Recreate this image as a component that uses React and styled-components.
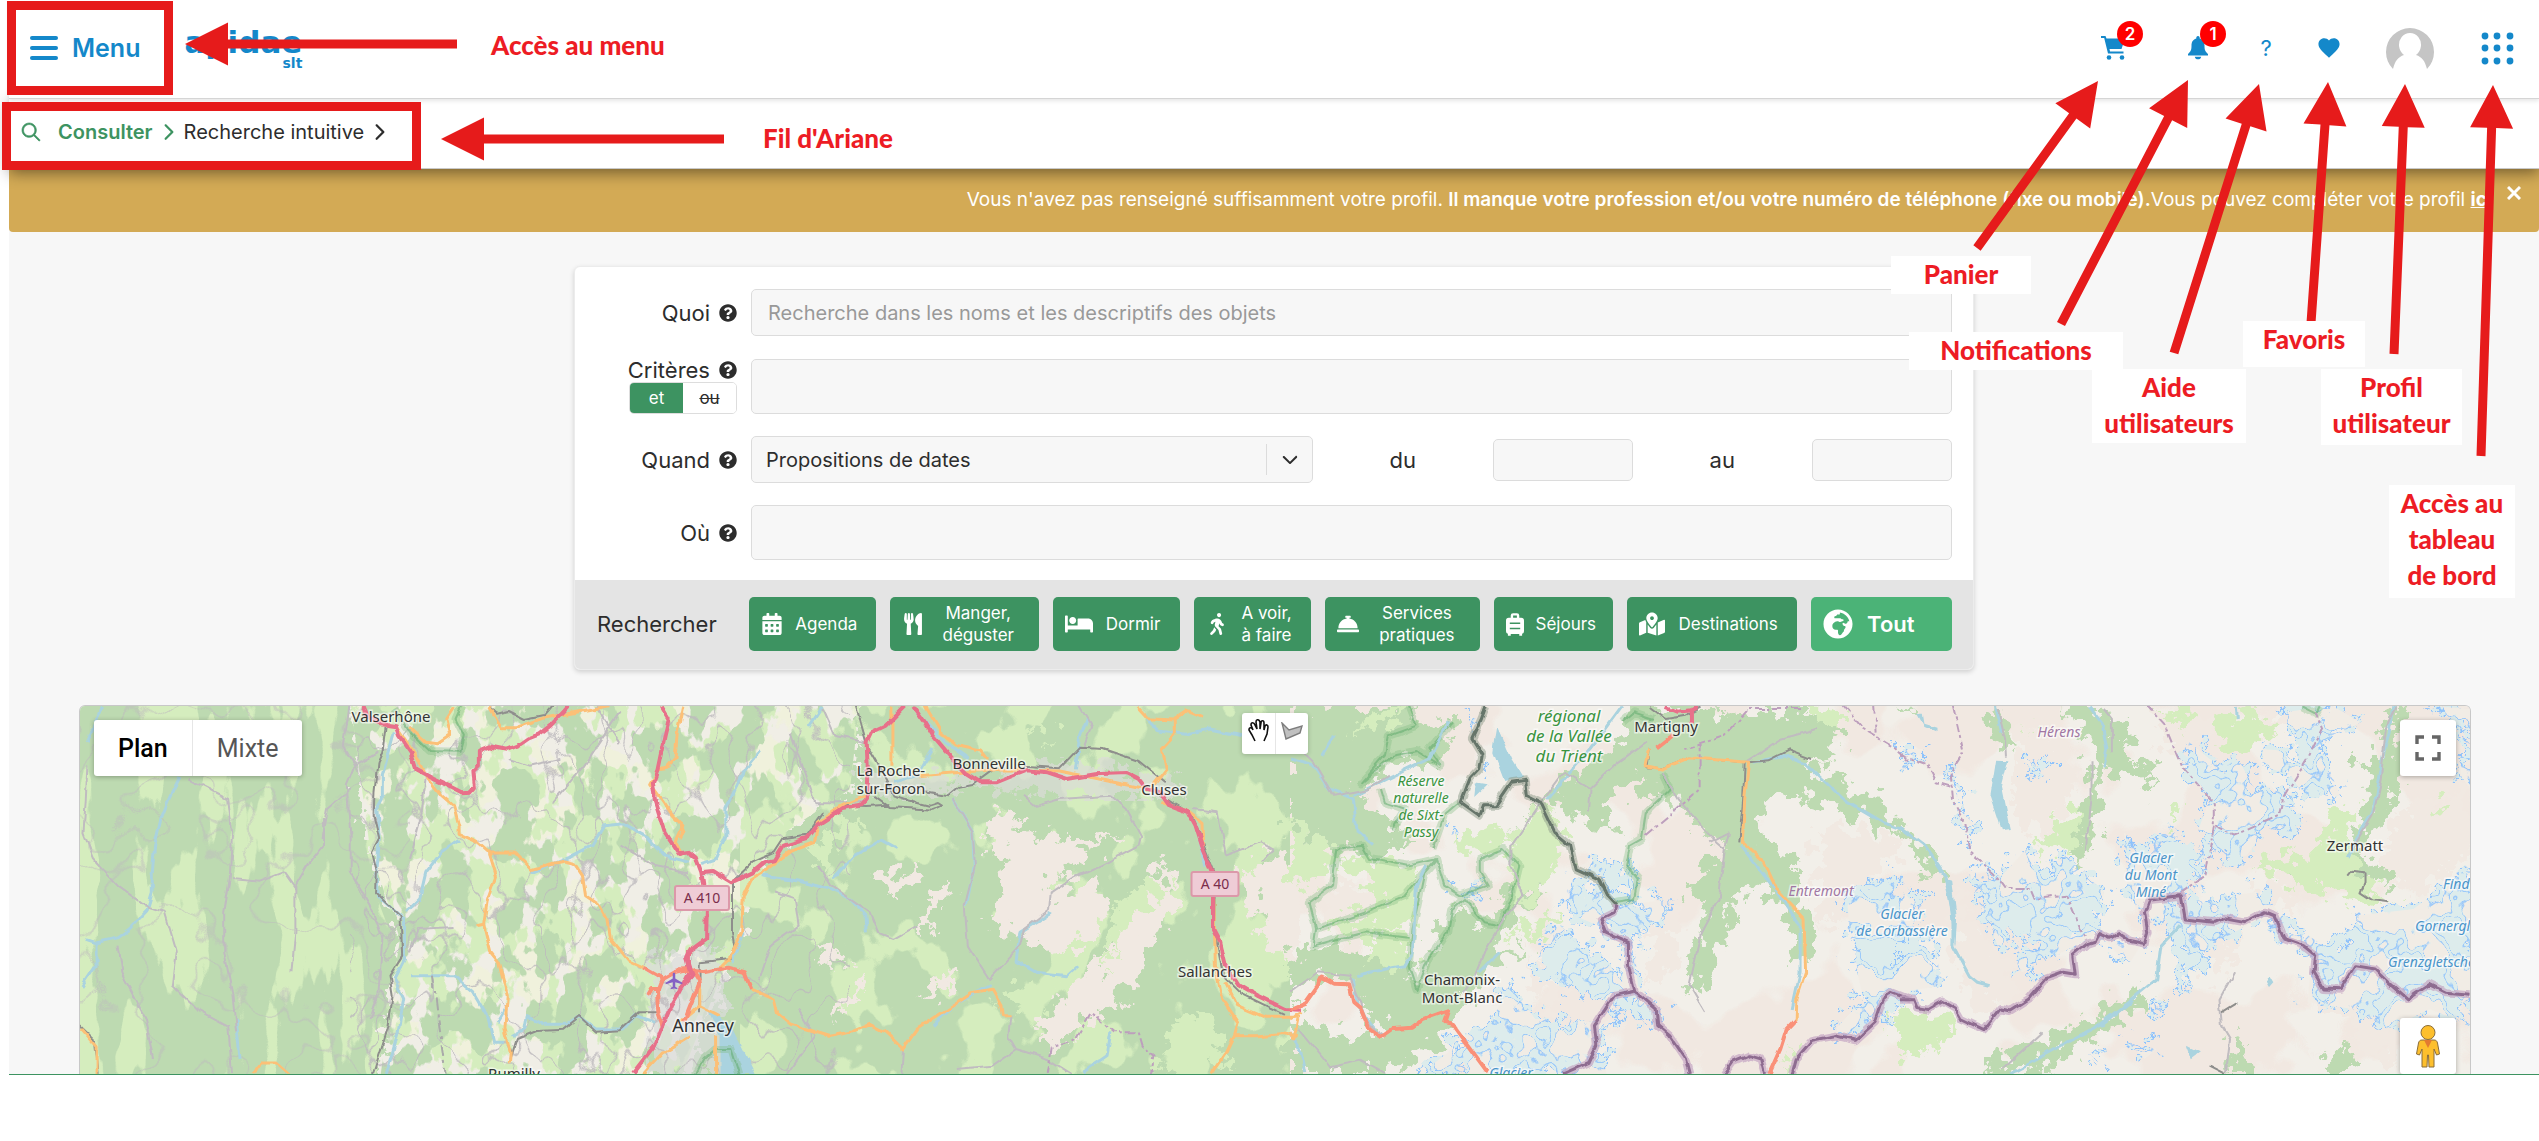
import { useState } from "react";
import styled, { createGlobalStyle } from "styled-components";
import {
  FaBed,
  FaCalendarAlt,
  FaConciergeBell,
  FaGlobeAfrica,
  FaMapMarkedAlt,
  FaQuestionCircle,
  FaUtensils,
  FaWalking,
} from "react-icons/fa";
import {
  IoIosArrowDown,
  IoIosArrowForward,
  IoIosSearch,
  IoMdHeart,
} from "react-icons/io";
import { MdLocalAirport } from "react-icons/md";

export default function App() {
  return (
    <Page>
      <GlobalStyle />
      <Header />
      <Breadcrumb />
      <Content>
        <ProfileBanner />
        <SearchForm />
        <MapPanel />
      </Content>
      <Annotations />
    </Page>
  );
}

function Header() {
  return (
    <TopBar>
      <MenuButton type="button">
        <Burger>
          <i />
          <i />
          <i />
        </Burger>
        Menu
      </MenuButton>
      <Logo href="#">
        apidae
        <small>slt</small>
      </Logo>
      <Tools>
        <ToolButton type="button" aria-label="Panier" $space={20}>
          <svg width="24" height="24" viewBox="0 0 24 24" fill="currentColor">
            <path d="M0 0H4.500L5.500 2.500H24L20.500 13H8.500L9 15.500H22.500V17.500H7L3.200 2H0Z" />
            <circle cx="8" cy="21.500" r="2.300" />
            <circle cx="21" cy="21.500" r="2.300" />
          </svg>
          <Badge>2</Badge>
        </ToolButton>
        <ToolButton type="button" aria-label="Notifications" $space={8}>
          <svg width="20" height="24" viewBox="0 0 20 24" fill="currentColor">
            <path d="M10 0C11.500 0 11.800 1.500 11.700 2.400 15.500 3.500 16.500 6.500 16.500 9.500 16.500 14 17 15 20 18V19.500H0V18C3 15 3.500 14 3.500 9.500 3.500 6.500 4.500 3.500 8.300 2.400 8.200 1.500 8.500 0 10 0ZM6.800 20.800H13.200C13 24.200 7 24.200 6.800 20.800Z" />
          </svg>
          <Badge>1</Badge>
        </ToolButton>
        <HelpButton type="button">?</HelpButton>
        <ToolButton type="button" aria-label="Favoris">
          <IoMdHeart size={26} />
        </ToolButton>
        <AvatarButton type="button" aria-label="Profil utilisateur">
          <svg width="50" height="50" viewBox="0 0 50 50">
            <path
              d="M8 46A24 24 0 1 1 42 46C40 38 37 34 31 32A11 12 0 1 0 19 32C13 34 10 38 8 46Z"
              fill="#c5c5c5"
            />
          </svg>
        </AvatarButton>
        <ToolButton type="button" aria-label="Tableau de bord">
          <svg width="36" height="33" viewBox="-3 0 36 33" fill="currentColor">
            {[4, 16, 29].map((y) =>
              [4, 16, 29].map((x) => <circle key={x + "-" + y} cx={x} cy={y} r="3.4" />)
            )}
          </svg>
        </ToolButton>
      </Tools>
    </TopBar>
  );
}

function Breadcrumb() {
  return (
    <Crumbs>
      <IoIosSearch size={24} color="#3d9361" stroke="#3d9361" strokeWidth="14" />
      <a href="#">Consulter</a>
      <IoIosArrowForward size={24} color="#3d9361" />
      <span>Recherche intuitive</span>
      <IoIosArrowForward size={24} />
    </Crumbs>
  );
}

function ProfileBanner() {
  return (
    <Banner>
      <p>
        Vous n'avez pas renseigné suffisamment votre profil.{" "}
        <strong>
          Il manque votre profession et/ou votre numéro de téléphone (fixe ou
          mobile).
        </strong>
        Vous pouvez compléter votre profil <a href="#">ici</a>
      </p>
      <CloseButton type="button" aria-label="Fermer">
        <svg width="14" height="14" viewBox="0 0 14 14" stroke="#fff" strokeWidth="3">
          <path d="M1 1L13 13M13 1L1 13" />
        </svg>
      </CloseButton>
    </Banner>
  );
}

const categories = [
  { label: "Agenda", icon: FaCalendarAlt, width: 127 },
  { label: "Manger,\ndéguster", icon: FaUtensils, width: 149 },
  { label: "Dormir", icon: FaBed, width: 127, size: 28 },
  { label: "A voir,\nà faire", icon: FaWalking, width: 118 },
  { label: "Services\npratiques", icon: FaConciergeBell, width: 155 },
  { label: "Séjours", icon: SuitcaseIcon, width: 119 },
  { label: "Destinations", icon: FaMapMarkedAlt, width: 170, size: 26 },
];

function SearchForm() {
  const [operator, setOperator] = useState("et");
  return (
    <Card>
      <Fields>
        <Label htmlFor="quoi">
          Quoi <FaQuestionCircle size={18} />
        </Label>
        <Input
          id="quoi"
          placeholder="Recherche dans les noms et les descriptifs des objets"
        />

        <CriteriaLabel>
          <Label htmlFor="criteres">
            Critères <FaQuestionCircle size={18} />
          </Label>
          <Toggle>
            {["et", "ou"].map((value) => (
              <ToggleButton
                key={value}
                type="button"
                $active={operator === value}
                onClick={() => setOperator(value)}
              >
                {value}
              </ToggleButton>
            ))}
          </Toggle>
        </CriteriaLabel>
        <Input id="criteres" $tall />

        <Label htmlFor="quand">
          Quand <FaQuestionCircle size={18} />
        </Label>
        <Dates>
          <SelectWrap>
            <select id="quand">
              <option>Propositions de dates</option>
            </select>
            <SelectArrow>
              <IoIosArrowDown size={22} />
            </SelectArrow>
          </SelectWrap>
          <label htmlFor="du">du</label>
          <DateInput id="du" />
          <label htmlFor="au">au</label>
          <DateInput id="au" />
        </Dates>

        <Label htmlFor="ou">
          Où <FaQuestionCircle size={18} />
        </Label>
        <Input id="ou" $tall />
      </Fields>
      <CardFooter>
        <FooterTitle>Rechercher</FooterTitle>
        {categories.map(({ label, icon: Icon, width, size = 22 }) => (
          <CategoryButton key={label} type="button" $width={width}>
            <Icon size={size} />
            <span>{label}</span>
          </CategoryButton>
        ))}
        <AllButton type="button" $width={141}>
          <FaGlobeAfrica size={30} />
          <span>Tout</span>
        </AllButton>
      </CardFooter>
    </Card>
  );
}

function SuitcaseIcon() {
  return (
    <svg width="18" height="23" viewBox="0 0 19 24" fill="currentColor">
      <path
        fillRule="evenodd"
        d="M5 5V2.500A2.500 2.500 0 0 1 7.500 0h4A2.500 2.500 0 0 1 14 2.500V5h2a3 3 0 0 1 3 3v11a3 3 0 0 1-2 2.800V24h-3v-2H5v2H2v-2.200A3 3 0 0 1 0 19V8a3 3 0 0 1 3-3zm2.500 0h4V2.500h-4zM4 10v1.500h11V10zm0 5.500V17h11v-1.500z"
      />
    </svg>
  );
}

function MapPanel() {
  return (
    <MapFrame>
      <MapDrawing />
      <MapTypes>
        <MapTypeButton type="button" $active>
          Plan
        </MapTypeButton>
        <MapTypeButton type="button">Mixte</MapTypeButton>
      </MapTypes>
      <DrawTools>
        <button type="button" aria-label="Déplacer">
          <svg width="22" height="24" viewBox="0 0 22 24" fill="#fff" stroke="#111" strokeWidth="1.600">
            <path
              d="M7 22L4 16 1 11C1 8 4 8 5 11L3 6C3 3 6 3 7 6L9 10 8 3C8 0 11 0 12 3L12 10 13 4C13 1 16 1 16 4L16 11 17 7C18 5 20 6 20 8L19 15 16 22"
            />
          </svg>
        </button>
        <button type="button" aria-label="Polygone">
          <svg width="22" height="18" viewBox="0 0 22 18">
            <path d="M1 1L8 8 21 4 19 11 5 17Z" fill="#c0c0c0" stroke="#7d7d7d" strokeWidth="1.400" />
          </svg>
        </button>
      </DrawTools>
      <MapSquareButton type="button" aria-label="Plein écran">
        <svg width="26" height="26" viewBox="0 0 26 26" fill="none" stroke="#666" strokeWidth="3.400">
          <path d="M2 9V2H9M17 2H24V9M24 17V24H17M9 24H2V17" />
        </svg>
      </MapSquareButton>
      <MapSquareButton type="button" aria-label="Street View" $bottom>
        <svg width="24" height="44" viewBox="0 0 24 44" stroke="#8a6d3b" strokeWidth="1">
          <path
            d="M6 16H18C20 16 21 17 21.500 19L23.500 30 20.500 31 18 25 18 43H13L12.500 31H11.500L11 43H6L6 25 3.500 31 .5 30 2.500 19C3 17 4 16 6 16Z"
            fill="#fdbf2d"
          />
          <path d="M8 16H16L12 24Z" fill="#e27a31" stroke="none" />
          <circle cx="12" cy="8.500" r="7" fill="#fdbf2d" />
        </svg>
      </MapSquareButton>
    </MapFrame>
  );
}

// Each sheet has its own grid: 2.53 units per pixel across, 3 units down.
const sheets = [
  {
    x: 70,
    scale: 0.3954,
    lakes: "",
    rivers:
      "M80 24L60 80 44 130M278 234L250 300 230 360 214 440 208 520 208 580 194 636 150 690 120 716 66 732 40 722M66 732L66 800 30 864M820 100L790 230 790 300 776 330 782 420 776 520 780 590 846 660 846 780 820 840 844 900 830 1000 800 1125M984 424L940 460 900 520 884 600 850 640M860 830L970 830 1020 880 1060 960 1074 1030 1100 1030M1100 930L1080 970M1120 1010L1150 990 1156 950 1200 976 1260 976 1290 956 1330 990 1400 990 1430 950 1480 970M1568 490L1500 470 1456 410 1400 374 1350 380 1320 440 1264 474 1166 520M420 960L430 1080",
    minor:
      "M44 200L40 300 34 400 60 480 120 560 190 620 240 640 270 760 260 860 320 930 400 980 410 1125M300 240L400 300 410 400 404 540 390 640 390 760 410 880 420 1000M704 20L690 140 720 200 700 260 710 420 710 520 760 620 790 720 780 880 760 960M640 360L640 440 600 500 570 560 570 700 560 820M970 684L880 690 860 760M1390 130L1330 20M1390 40L1300 200 1220 310M720 200L780 160M710 270L650 330 636 420M410 540L480 548 540 520 570 570M1240 180L1160 200 1110 180M1390 440L1480 500 1560 520M900 230L890 340 860 480M120 740L130 820 190 960 210 1080",
    rail:
      "M798 84L790 160 778 190 770 280 768 350 782 420 764 460 776 520 774 580 800 610 836 650 840 770 808 830 816 890 806 980 766 1125M1114 1080L1130 1020 1180 996 1250 992 1290 954 1330 998 1390 994 1440 940 1490 940M25 980L60 1020 70 1125M1060 24L1080 44 1110 36 1150 60 1200 48 1220 20",
    minorDash: "M918 830L930 950 950 1125",
    orange:
      "M824 82L880 180 900 230 940 290 970 320 984 380 984 406 1030 430 1060 462 1126 462 1166 512 1210 496 1250 486 1276 494 1296 530 1304 590 1336 616 1358 660 1364 716 1410 784 1450 806M1058 462L1076 532 1056 600 1046 676 1028 680M1046 676L1064 760 1084 790 1106 890 1100 990 1116 1060 1114 1090M1060 24L1090 86 1130 86 1200 56 1270 42 1364 20M1550 20L1536 100 1530 180 1510 208 1486 212 1466 254 1494 300 1524 350 1550 380 1530 430 1545 460M858 84L900 130 930 134 960 110 950 60 970 24M30 990L66 1040 66 1125M465 1125L480 1092 520 1092 552 1125M1568 1010L1500 1060 1450 1125",
    trunk:
      "M1450 806L1500 840 1530 820 1568 808M1500 840L1490 870 1470 870 1460 890M1484 870L1488 940 1500 985",
    motorway:
      "M742 20L752 50 780 74 824 82 832 110 862 160 876 212 920 240 960 262 990 280 1012 278 1024 262 1020 216 1034 200 1034 155 1060 142 1104 152 1140 135 1160 118 1186 106 1215 80 1250 36 1262 20M1494 20L1514 60 1504 110 1486 212 1474 250 1480 310 1504 400 1540 465 1568 458M1568 750L1558 775 1568 815 1540 880 1520 920 1498 985 1480 1040 1424 1125",
    reserve: "M820 30L860 100 910 156 985 158 996 110 975 60 990 20",
    region: "",
    border: "",
    frontier: "",
  },
  {
    x: 680,
    scale: 0.3954,
    lakes: "M70 930L130 980 190 1125 100 1125 100 1010Z",
    rivers:
      "M360 24L326 84M204 154L160 220 140 270 116 330 116 410 90 480 56 494M550 450L510 424 440 470 386 540M204 530L300 546 376 570 430 600 470 650 474 700M690 300L740 400 744 500 724 620M1008 800L980 830 900 820 850 786 860 700 940 640M786 860L736 890 690 920 640 980M1180 60L1210 96 1280 106 1340 90 1420 110M600 40L670 130 730 180M1000 214L1010 120 1030 60M1310 400L1330 500M1090 1000L1080 1070 1020 1120M160 700L130 790M640 150L600 230 540 250",
    minor:
      "M690 300L740 400 746 500 720 620 728 740 782 840 860 740 870 690 936 630 940 580 990 540 1080 490 1160 440 1166 410 1130 330 1090 290M360 30L390 110 470 130M280 100L340 310 470 310M236 580L290 600 300 680 230 740 200 850M350 500L380 560 480 640 500 700 540 720 600 680M300 930L340 1010 270 1125M836 950L830 1010 850 1050 930 1080 990 1125M850 1050L790 1100 700 1110M1300 330L1360 340 1380 470 1470 430 1500 450 1470 490M870 290L900 320 960 300 1090 290M564 1050L560 1125M1010 20L1040 80 1020 150",
    rail:
      "M445 20L464 100 476 150 510 220 540 290 600 310M490 290L530 324 640 332 660 320 650 312 630 320 560 300M620 280L680 292 706 266 740 258 790 214M870 200L960 208 1010 146 1070 150 1160 186 1226 250M410 320L470 324 530 320M362 340L320 410 262 420 240 460 184 490 134 546 134 700 140 740 126 780 50 790 48 940M1216 290L1296 350 1352 520 1352 700 1374 830 1420 884 1530 948",
    minorDash: "",
    orange:
      "M620 20L660 100 700 140 760 156 776 180M536 20L536 200M604 230L790 212 960 216 1180 270M472 290L410 320 350 370 340 430 280 456 220 510 180 540 160 590 156 700 130 770 100 806M180 870L236 900 244 940 280 976 380 1012 430 1000 480 976 520 1000 564 1050 600 990 690 920 736 884 790 874 812 920 815 950 836 950M1350 600L1354 800 1370 900 1410 970 1400 1010 1460 1010 1520 1004 1560 1010M1400 1010L1380 1060 1345 1120M1380 850L1410 920 1480 955 1568 955M1155 24L1180 56 1250 60 1250 110 1220 150 1230 210 1190 270M1250 60L1280 36 1320 56M1220 310L1290 340 1320 370 1322 450M0 370L10 400 0 420M0 970L50 920 100 950M50 850L50 920M90 1010L90 1125",
    trunk: "M0 810L60 820 120 806 164 820 180 870M30 810L50 850 10 970",
    motorway:
      "M0 462L24 460 40 476 54 520 84 516 130 550 184 520 214 490 240 484 262 440 320 420 350 376 410 330 456 320 472 300 476 240 472 130 484 100 520 80 570 20M590 20L620 70 640 110 690 180 720 220 760 250 800 250 876 214 930 220 980 240 1050 226 1130 222 1160 240 1180 270 1216 280 1240 320 1286 340 1304 380 1320 440 1348 520 1348 690 1366 730 1380 800 1410 856 1460 890 1530 930 1568 932M54 520L68 630 66 720 20 760 20 800 30 830 0 870",
    reserve: "M40 1125L60 1080 90 1050 130 1050 150 1125",
    region: "M930 1125L940 1045 1000 1020 1040 940 1070 970 1100 1000 1160 1000 1170 1040 1200 1070 1190 1125",
    border: "",
    frontier: "",
  },
  {
    x: 1290,
    scale: 0.3954,
    lakes: "M524 84L560 180 590 236 542 246 514 160ZM470 250L500 256 466 294Z",
    rivers:
      "M0 180L60 200 100 270 160 300 170 400 210 440M400 70L350 180 160 290M344 500L320 560 310 760 290 800 200 820 170 830M1170 190L1250 170 1300 190 1400 300 1500 370 1568 400M1140 440L1220 560 1290 680 1290 820 1270 930M840 20L760 150 650 300M0 1000L30 1060 40 1125M530 760L480 820M160 840L170 920 220 1000M110 110L80 170",
    minor:
      "M640 300L560 440 560 500 590 590 540 660 500 740 470 830 440 880M640 300L690 220 760 270 830 190 900 130M756 340L760 270M940 220L980 300 1080 430 1100 450 1084 600 1040 700 1010 860 1050 940M0 880L70 820 150 830 200 980 240 1010M20 990L100 1105 180 1085 240 1125M1150 190L1240 120 1330 90M1100 450L1110 400 1060 430M0 120L60 190 110 290 200 270 250 230",
    rail:
      "M910 24L950 60 1000 50 1040 24M910 150L904 205 940 208 1010 176 1150 190 1146 300 1136 430M1160 190L1210 184 1260 154 1316 180",
    minorDash: "",
    orange:
      "M910 150L900 200 940 210 1010 176 1160 190 1150 300 1144 430 1200 490 1230 570 1300 660 1304 820 1282 900 1280 960M0 960L30 940M0 1000L10 1020 20 960",
    trunk:
      "M0 930L40 910 70 860 80 836 110 854 150 856 160 910 180 930 200 990 232 1014 260 990 310 986 340 960 400 934 390 970 410 975 500 1120M1280 960L1256 990 1240 1050 1212 1125M968 110L930 145",
    motorway: "M950 24L980 38 1014 34 1030 24M1014 34L1014 70",
    reserve:
      "M300 20L320 80 250 110 240 170 180 250 260 170 320 156 380 200 350 150 410 70M120 450L106 560 50 610 66 690 190 640 290 590 370 480 300 500 200 480 180 440 120 450M66 690L60 740 120 720 190 700 300 716M340 520L310 690 300 800 320 870 350 780 400 700 410 630 440 600 490 670 530 680 560 600 580 500 540 450 480 480 480 520 500 560 430 590 390 560 370 480 M360 450L390 350 430 310M940 220L960 270 900 340 890 420 860 440 850 500 880 540 870 600 820 610M840 70L870 40 920 60M230 270L240 310 290 330 260 390",
    region:
      "M1400 20L1450 90 1520 140 1568 190M1480 20L1484 110M1036 130L1036 270 980 330 900 410M1290 30L1160 30 1100 110 1000 150",
    border:
      "M496 20L484 60 460 120 486 170 480 206 456 236 432 310 480 350 490 320 520 320 560 250 596 244 600 290 634 310 670 400 710 440 724 510 780 540 800 590 824 620",
    frontier:
      "M824 620L820 640 786 660 800 700 856 730 856 800 872 876 820 890 770 980 776 1040 756 1090 690 1125M872 876L926 930 930 980 960 1010 1000 1080 1010 1125M1100 1125L1120 1090 1160 1070 1190 1080 1200 1125M1270 1125L1280 1080 1320 1024 1380 1010 1430 1024 1480 970 1500 900 1520 880 1568 902",
  },
  {
    x: 1900,
    scale: 0.4075,
    lakes:
      "M236 182L266 184 250 260 272 390 250 394 222 290ZM115 540L128 545 140 660 136 740 124 640ZM476 990L560 906 570 910 500 980ZM704 1040L736 1060 716 1078ZM906 828L916 850 904 866 896 850ZM42 44L56 44 60 74 92 86 92 100 60 84Z",
    rivers:
      "M0 384L60 440 110 530 130 640 130 740 170 830 190 850 220 860M686 680L640 740 630 840 560 910 476 990 380 1050 270 1125M462 20L500 80 510 150 500 206M1210 20L1200 100 1180 200 1160 340 1120 420 1100 480M232 24L250 100M825 24L828 60",
    minor:
      "M1216 24L1192 90 1180 240 1160 350 1110 450M820 820L784 900 790 980 810 1020 800 1120M470 190L470 300 456 450M500 30L520 60 520 160M240 30L258 120 260 170M350 1000L250 1110",
    rail: "M1100 530L1110 515 1140 520 1140 550 1130 580 1160 604 1200 610M790 940L830 910M760 1100L800 1125",
    minorDash: "",
    orange: "",
    trunk: "",
    motorway: "",
    reserve: "M985 22L1020 44 1030 22",
    region:
      "M130 20L156 160 124 220 130 300 160 370 170 460 230 520 260 570 320 570 330 600 410 590 440 680 460 720M606 20L650 80 690 200 740 270 770 310 770 380 820 410 930 350 940 300 1000 180 1036 90 1020 40M770 380L750 530 680 590M0 170L70 200 90 250 130 265",
    border: "",
    frontier:
      "M0 902L36 902 44 926 70 932 104 908 136 930 150 960 206 992 246 930 270 936 316 900 356 840 400 820 430 826 424 770 460 734 480 726 490 704 516 718 536 704 560 724 600 734 608 700 600 640 612 600 690 590 700 660 770 670 796 656 850 668 896 638 920 650 944 720 990 740 1020 770 1016 820 1040 870 1080 872 1116 800 1166 810 1200 850 1246 900 1300 856 1340 880 1400 886",
  },
];

const lineStyles = [
  { key: "reserve", stroke: "#7dbb7d", width: 8, opacity: 0.35 },
  { key: "reserve", stroke: "#5aa76a", width: 2, opacity: 0.5 },
  { key: "rivers", stroke: "#aad3df", width: 3 },
  { key: "minor", stroke: "#c0bcc0", width: 2 },
  { key: "minorDash", stroke: "#a9a9a9", width: 2, dash: "12 4 3 4" },
  { key: "rail", stroke: "#8e8e8c", width: 2 },
  { key: "orange", stroke: "#fcc077", width: 3 },
  { key: "trunk", stroke: "#fa9078", width: 4 },
  { key: "motorway", stroke: "#e8708a", width: 4 },
  { key: "region", stroke: "#bd9fbd", width: 2, dash: "9 3 3 3" },
  { key: "border", stroke: "#8d9c8a", width: 8, opacity: 0.5 },
  { key: "border", stroke: "#66756a", width: 3 },
  { key: "frontier", stroke: "#c5a5c3", width: 8, opacity: 0.7 },
  { key: "frontier", stroke: "#8e6c90", width: 3 },
];

const land = [
  {
    x: 680,
    scale: 0.3954,
    rock:
      "M790 340L860 336 840 400 960 420 1030 420 1124 388 1060 450 1000 500 930 560 980 580 1060 560 1080 620 1050 720 960 760 900 740 780 660 830 540 780 470ZM1230 480L1260 600 1210 720 1140 860 1050 950 960 1050 900 1010 960 900 1060 790 1120 640ZM510 520L600 520 590 560 540 590ZM350 750L410 740 410 800 370 800ZM390 920L460 830 450 900 400 960ZM600 640L690 540 670 600 610 700ZM620 870L720 790 680 860 600 920ZM1420 500L1568 470 1568 800 1480 740Z",
    forest: "",
    meadow:
      "M880 60L940 70 940 120 900 110ZM320 440L440 350 480 380 380 460 360 520ZM800 890L860 850 960 860 900 960ZM1100 620L1200 540 1240 560 1130 680 1080 800ZM1260 960L1320 920 1400 1100 1200 1120Z",
    glacier: "",
  },
  {
    x: 1290,
    scale: 0.3954,
    rock: "M90 560L280 560 140 660 70 680ZM940 600L990 640 970 820 900 860ZM600 760L700 900 640 960ZM1330 380L1560 420 1500 500 1340 700Z",
    forest:
      "M0 20L300 20 320 80 420 60 400 120 380 200 260 180 180 280 220 340 320 430 200 480 120 440 0 380ZM540 440L640 300 720 220 840 120 860 20 1040 20 1160 60 1200 30 1290 40 1390 90 1380 180 1300 190 1470 290 1568 400 1500 390 1400 340 1300 300 1210 280 1190 420 1290 500 1290 600 1330 700 1320 800 1280 800 1260 650 1180 560 1130 590 1100 720 1050 860 1000 880 1020 740 1060 620 990 580 1100 440 1000 340 940 260 900 320 880 240 800 300 820 420 740 360 640 310ZM60 740L220 760 300 800 330 860 370 700 440 620 480 680 560 560 600 520 640 560 560 680 500 760 600 740 500 820 420 960 400 1000 300 1080 240 1010 180 900 150 850 80 830 0 900 0 760ZM0 960L120 1000 240 1010 400 960 330 1060 250 1125 0 1125Z",
    meadow:
      "M120 480L320 500 300 700 150 700 80 690 240 600ZM560 420L640 320 700 440 640 560 560 640ZM0 380L120 440 100 520 0 560ZM400 420L540 380 560 440 470 470ZM200 700L300 720 290 800 200 800ZM150 120L240 80 300 40 240 20ZM560 700L680 640 620 740ZM1280 20L1390 20 1380 90ZM1250 1040L1280 1050 1260 1125ZM1510 940L1568 930 1568 1080Z",
    glacier:
      "M730 500L790 480 850 490 870 540 870 600 820 610 780 540ZM700 560L790 560 830 620 970 600 920 690 870 720 880 860 940 930 900 980 860 900 790 1000 800 1125 330 1125 400 1060 420 1020 500 980 560 860 620 960 700 960 830 980 800 900 720 880 620 800 640 740 680 680 780 760 840 850 850 730 780 680 700 640ZM1410 620L1450 560 1510 530 1568 600 1568 900 1480 960 1400 1020 1380 990 1450 900 1420 740ZM480 180L500 190 490 220ZM400 390L420 400 400 415ZM430 570L490 550 480 580 440 590ZM455 50L470 60 460 110ZM1545 180L1568 190 1550 215Z",
  },
  {
    x: 1900,
    scale: 0.4075,
    rock:
      "M280 80L400 120 440 220 360 420 280 360ZM600 20L780 60 690 200ZM880 500L1000 600 900 640ZM1220 340L1400 260 1400 460 1240 600 1180 500ZM130 560L200 700 300 860 200 960 140 800ZM700 620L840 700 780 860ZM940 860L1220 960 1200 1125 1100 980ZM860 20L950 30 900 140Z",
    forest:
      "M210 20L250 20 270 150 240 140ZM380 20L470 20 500 60 540 50 570 120 550 180 610 180 630 280 580 220 490 240 490 330 450 490 430 430 460 260 480 120ZM1200 20L1250 20 1230 80 1240 230 1180 380 1130 460 1190 500 1200 550 1070 530 940 540 930 490 1060 500 1130 400 1150 260 1120 180 1180 180ZM200 1125L240 1060 350 1040 440 970 600 870 620 890 520 980 420 1060 380 1110ZM0 380L60 440 120 530 90 550 20 440ZM1020 1125L1060 1070 1100 1020 1110 1125ZM800 1125L830 1000 860 1125ZM0 20L50 20 20 50Z",
    meadow:
      "M760 60L880 40 930 100 820 160ZM870 500L1030 440 1060 320 1120 330 1100 440 1180 600 1240 620 1100 600 950 540ZM330 460L400 340 450 320 430 460ZM0 960L120 950 130 1010 30 1080 0 1070ZM640 30L720 40 700 100ZM650 320L690 330 680 370ZM1310 310L1350 310 1330 350ZM320 60L340 80 330 110Z",
    glacier:
      "M0 600L60 600 30 680 90 760 100 860 0 880ZM170 520L250 530 310 450 330 520 410 470 500 580 490 700 430 740 300 820 280 800 340 700 240 740 200 630ZM710 130L760 180 800 200 830 180 870 270 960 280 980 400 900 390 850 470 790 480 730 400 760 300 690 200ZM550 400L600 460 660 380 700 440 760 460 740 540 680 600 620 660 560 600ZM610 620L700 610 870 580 900 590 940 660 1040 740 1110 700 1120 650 1260 630 1400 500 1400 980 1300 930 1200 990 1110 930 1000 910 1010 780 880 660 760 740 700 880 680 720ZM940 40L1060 20 1130 70 1040 130 1050 200 1080 290 990 290 960 230 890 200 890 150 980 160ZM300 180L370 180 340 230ZM0 150L60 150 20 190ZM1300 20L1400 30 1400 270 1370 220 1380 100ZM610 920L650 900 640 940ZM560 1030L630 1050 600 1080ZM470 1070L490 1070 480 1105ZM500 720L590 740 560 800ZM120 220L150 220 140 290ZM140 330L200 390 170 440Z",
  },
];

const places = [
  { x: 391, y: 723, lines: ["Valserhône"] },
  { x: 891, y: 777, lines: ["La Roche-", "sur-Foron"] },
  { x: 989, y: 770, lines: ["Bonneville"] },
  { x: 1164, y: 796, lines: ["Cluses"] },
  { x: 1215, y: 978, lines: ["Sallanches"] },
  { x: 703, y: 1033, lines: ["Annecy"], size: 18 },
  { x: 514, y: 1080, lines: ["Rumilly"] },
  { x: 1666, y: 733, lines: ["Martigny"] },
  { x: 1462, y: 986, lines: ["Chamonix-", "Mont-Blanc"] },
  { x: 2355, y: 852, lines: ["Zermatt"] },
  { x: 1569, y: 723, lines: ["régional", "de la Vallée", "du Trient"], size: 17, kind: "park" },
  { x: 1421, y: 787, lines: ["Réserve", "naturelle", "de Sixt-", "Passy"], size: 14, kind: "park" },
  { x: 1821, y: 897, lines: ["Entremont"], size: 14, kind: "district" },
  { x: 2059, y: 738, lines: ["Hérens"], size: 14, kind: "district" },
  { x: 1902, y: 920, lines: ["Glacier", "de Corbassière"], size: 14, kind: "ice" },
  { x: 2151, y: 864, lines: ["Glacier", "du Mont", "Miné"], size: 14, kind: "ice" },
  { x: 1511, y: 1079, lines: ["Glacier"], size: 14, kind: "ice" },
  { x: 2443, y: 890, lines: ["Findelgletscher"], size: 14, kind: "ice", anchor: "start" },
  { x: 2415, y: 932, lines: ["Gornergletscher"], size: 14, kind: "ice", anchor: "start" },
  { x: 2388, y: 968, lines: ["Grenzgletscher"], size: 14, kind: "ice", anchor: "start" },
];

const placeColors = {
  town: "#333",
  park: "#3a9440",
  district: "#a077a3",
  ice: "#4a94c9",
};

// Blotches of one colour, cut out of the shape the filter is set on.
function PatchFilter({ id, frequency, seed, color, cut }) {
  const [r, g, b] = color;
  return (
    <filter id={id} x="0" y="0" width="100%" height="100%" colorInterpolationFilters="sRGB">
      <feTurbulence type="fractalNoise" baseFrequency={frequency} numOctaves="4" seed={seed} />
      <feColorMatrix
        values={`0 0 0 0 ${r / 255} 0 0 0 0 ${g / 255} 0 0 0 0 ${b / 255} 30 0 0 0 ${-30 * cut}`}
      />
      <feComposite operator="in" in2="SourceGraphic" />
    </filter>
  );
}

// Thin winding lines that follow some levels of the noise.
function ContourFilter({ id, frequency, seed, color, levels }) {
  const [r, g, b] = color;
  return (
    <filter id={id} x="0" y="0" width="100%" height="100%" colorInterpolationFilters="sRGB">
      <feTurbulence type="fractalNoise" baseFrequency={frequency} numOctaves="3" seed={seed} />
      <feColorMatrix
        values={`0 0 0 0 ${r / 255} 0 0 0 0 ${g / 255} 0 0 0 0 ${b / 255} 1 0 0 0 0`}
      />
      <feComponentTransfer>
        <feFuncA
          type="table"
          tableValues={Array.from({ length: 61 }, (_, i) => (levels.includes(i) ? 0.9 : 0)).join(" ")}
        />
      </feComponentTransfer>
      <feComposite operator="in" in2="SourceGraphic" />
    </filter>
  );
}

function MapDrawing() {
  return (
    <MapSvg viewBox="80 707 2390 368" preserveAspectRatio="xMidYMid slice">
      <defs>
        <PatchFilter id="streaks" frequency="0.03 0.009" seed="4" color={[213, 237, 190]} cut={0.55} />
        <PatchFilter id="fields" frequency="0.035 0.022" seed="8" color={[213, 237, 190]} cut={0.5} />
        <PatchFilter id="farms" frequency="0.02" seed="15" color={[240, 241, 220]} cut={0.53} />
        <PatchFilter id="woods" frequency="0.034 0.022" seed="12" color={[189, 218, 177]} cut={0.51} />
        <PatchFilter id="clearings" frequency="0.018 0.014" seed="21" color={[213, 237, 190]} cut={0.55} />
        <PatchFilter id="scree" frequency="0.008" seed="31" color={[241, 232, 225]} cut={0.5} />
        <PatchFilter id="outcrops" frequency="0.03" seed="44" color={[241, 236, 229]} cut={0.54} />
        <ContourFilter id="tracks" frequency="0.014" seed="3" color={[189, 186, 189]} levels={[30]} />
        <ContourFilter id="lanes" frequency="0.024 0.016" seed="17" color={[189, 186, 189]} levels={[30]} />
        <ContourFilter id="crevasses" frequency="0.03" seed="44" color={[140, 193, 252]} levels={[26, 33]} />
        <filter id="rough" x="-5%" y="-5%" width="110%" height="110%">
          <feTurbulence type="fractalNoise" baseFrequency="0.07" numOctaves="4" seed="2" />
          <feDisplacementMap in="SourceGraphic" scale="46" xChannelSelector="R" yChannelSelector="G" />
        </filter>
        <filter id="wiggle" x="-5%" y="-5%" width="110%" height="110%">
          <feTurbulence type="fractalNoise" baseFrequency="0.07" numOctaves="2" seed="6" />
          <feDisplacementMap in="SourceGraphic" scale="6" xChannelSelector="R" yChannelSelector="G" />
        </filter>
      </defs>

      <rect x="60" y="700" width="1240" height="390" fill="#bddab1" />
      <path d="M70 700H395L370 880 400 960 375 1080H70Z" filter="url(#streaks)" />
      <g filter="url(#rough)">
        <path d="M350 690H860L850 790 760 850 740 930 680 1090H380L400 940 370 850Z" fill="#f0eee6" />
      </g>
      <path d="M350 700H860L850 790 760 850 740 930 680 1080H380L400 940 370 850Z" filter="url(#farms)" />
      <path d="M350 700H860L850 790 760 850 740 930 680 1080H380L400 940 370 850Z" filter="url(#fields)" />
      <path d="M350 700H860L850 790 760 850 740 930 680 1080H380L400 940 370 850Z" filter="url(#woods)" />
      <rect x="740" y="700" width="560" height="390" filter="url(#clearings)" />
      <path d="M860 770L960 780 1050 760 1180 780 1190 800 1090 800 960 790 870 796Z" fill="#dcdcd8" opacity=".7" filter="url(#rough)" />
      <path d="M650 960L720 950 730 1075 650 1075Z" fill="#dcdcdc" opacity=".7" filter="url(#rough)" />
      <rect x="1290" y="700" width="1200" height="390" fill="#f2efe9" />
      <rect x="1290" y="700" width="1200" height="390" filter="url(#scree)" />

      {land.map((sheet) => (
        <g key={sheet.x} filter="url(#rough)">
          <g transform={`translate(${sheet.x} 700) scale(${sheet.scale} .3333)`}>
            <path d={sheet.rock} fill="#f1e9e2" />
            <path d={sheet.forest} fill="#bddab1" />
            <path d={sheet.meadow} fill="#d5edbe" />
            <path
              d={sheet.glacier}
              fill="#ddecec"
              stroke="#8fc2fb"
              strokeWidth="2"
              strokeDasharray="7 4"
              vectorEffect="non-scaling-stroke"
            />
          </g>
        </g>
      ))}
      {land.map((sheet) =>
        ["outcrops", "crevasses"].map((texture) => (
          <g key={sheet.x + texture} filter={`url(#${texture})`}>
            <path
              d={sheet.glacier}
              transform={`translate(${sheet.x} 700) scale(${sheet.scale} .3333)`}
            />
          </g>
        ))
      )}

      <rect x="80" y="700" width="330" height="390" filter="url(#tracks)" opacity=".6" />
      <rect x="350" y="700" width="500" height="390" filter="url(#lanes)" />

      {sheets.map((sheet) => (
        <g key={sheet.x} filter="url(#wiggle)">
          <g
            transform={`translate(${sheet.x} 700) scale(${sheet.scale} .3333)`}
            fill="none"
            strokeLinejoin="round"
          >
            <path d={sheet.lakes} fill="#aad3df" />
            {lineStyles.map((line, index) => (
              <path
                key={index}
                d={sheet[line.key]}
                stroke={line.stroke}
                strokeWidth={line.width}
                strokeOpacity={line.opacity}
                strokeDasharray={line.dash}
                vectorEffect="non-scaling-stroke"
              />
            ))}
          </g>
        </g>
      ))}

      <MdLocalAirport x="664" y="972" size={20} color="#8461c4" />
      <RoadShield x={702} y={899} width={54} name="A 410" />
      <RoadShield x={1215} y={885} width={47} name="A 40" />

      {places.map(({ x, y, lines, size = 15, kind = "town", anchor = "middle" }) => (
        <PlaceName
          key={x}
          fill={placeColors[kind]}
          fontSize={size}
          textAnchor={anchor}
          $italic={kind !== "town"}
        >
          {lines.map((line, index) => (
            <tspan key={line} x={x} y={y + index * (size + 3)}>
              {line}
            </tspan>
          ))}
        </PlaceName>
      ))}
    </MapSvg>
  );
}

function RoadShield({ x, y, width, name }) {
  return (
    <g>
      <rect
        x={x - width / 2}
        y={y - 12}
        width={width}
        height="24"
        rx="2"
        fill="#efccd6"
        stroke="#dc98a9"
        strokeWidth="2"
      />
      <ShieldName x={x} y={y + 5} textAnchor="middle">
        {name}
      </ShieldName>
    </g>
  );
}

const headerArrows = [
  { tip: [185, 44], tail: [457, 44] },
  { tip: [441, 139], tail: [724, 139] },
];

const toolArrows = [
  { tip: [2098, 81], tail: [1977, 248] },
  { tip: [2188, 80], tail: [2061, 324] },
  { tip: [2259, 84], tail: [2174, 353] },
  { tip: [2328, 82], tail: [2311, 323] },
  { tip: [2405, 84], tail: [2394, 354] },
  { tip: [2493, 85], tail: [2481, 456] },
];

function Arrow({ tip, tail }) {
  const length = Math.hypot(tail[0] - tip[0], tail[1] - tip[1]);
  const angle = (Math.atan2(tail[1] - tip[1], tail[0] - tip[0]) * 180) / Math.PI;
  return (
    <path
      d={`M0 0L43 -21.500V-4.500H${length}V4.500H43V21.500Z`}
      transform={`translate(${tip[0]} ${tip[1]}) rotate(${angle})`}
    />
  );
}

function Annotations() {
  return (
    <Overlay>
      <Frame $left={7} $top={1} $width={166} $height={94} />
      <Frame $left={2} $top={102} $width={419} $height={68} />
      <ArrowLayer width="740" height="180" viewBox="0 0 740 180">
        {headerArrows.map((arrow) => (
          <Arrow key={arrow.tip[0]} {...arrow} />
        ))}
      </ArrowLayer>
      <ArrowLayer $end width="639" height="480" viewBox="1900 0 639 480">
        {toolArrows.map((arrow) => (
          <Arrow key={arrow.tip[0]} {...arrow} />
        ))}
      </ArrowLayer>
      <Note $left={491} $top={27}>Accès au menu</Note>
      <Note $left={763} $top={120}>Fil d'Ariane</Note>
      <NoteBox $right={508} $top={256} $width={140} $height={38}>Panier</NoteBox>
      <NoteBox $right={416} $top={332} $width={214} $height={38}>Notifications</NoteBox>
      <NoteBox $right={174} $top={321} $width={122} $height={46}>Favoris</NoteBox>
      <NoteBox $right={293} $top={369} $width={154} $height={74}>Aide utilisateurs</NoteBox>
      <NoteBox $right={77} $top={369} $width={141} $height={76}>Profil utilisateur</NoteBox>
      <NoteBox $right={24} $top={485} $width={126} $height={113}>Accès au tableau de&nbsp;bord</NoteBox>
    </Overlay>
  );
}

const GlobalStyle = createGlobalStyle`
  * {
    box-sizing: border-box;
  }
  body {
    margin: 0;
    background: #fff;
    color: #2d2d2d;
    font-family: Inter, "Liberation Sans", sans-serif;
    font-size: 20px;
  }
  button, input, select {
    font-family: inherit;
    color: inherit;
  }
  button {
    border: none;
    padding: 0;
    background: none;
    cursor: pointer;
  }
`;

const Page = styled.div`
  position: relative;
  padding-left: 9px;
  overflow: hidden;
`;

const TopBar = styled.header`
  position: relative;
  z-index: 2;
  display: flex;
  align-items: center;
  height: 99px;
  padding: 0 25px 2px 21px;
  background: #fff;
  border-bottom: 1px solid #d5d5d5;
  box-shadow: 0 2px 4px rgba(0, 0, 0, 0.1);
  color: #1488ca;
`;

const MenuButton = styled.button`
  display: flex;
  align-items: center;
  gap: 14px;
  color: #1488ca;
  font-size: 25px;
  font-weight: 600;
`;

const Burger = styled.span`
  display: grid;
  gap: 6px;
  width: 28px;
  i {
    height: 4px;
    border-radius: 2px;
    background: #1488ca;
  }
`;

const Logo = styled.a`
  display: grid;
  justify-items: end;
  margin-left: 44px;
  color: #1488ca;
  font-family: "DejaVu Sans", sans-serif;
  font-size: 31px;
  font-weight: 700;
  line-height: 30px;
  text-decoration: none;
  small {
    font-size: 14px;
    line-height: 12px;
  }
`;

const Tools = styled.div`
  display: flex;
  align-items: center;
  gap: 43px;
  margin-left: auto;
`;

const ToolButton = styled.button`
  position: relative;
  display: flex;
  margin-right: ${({ $space = 0 }) => $space}px;
  color: #1488ca;
`;

const HelpButton = styled(ToolButton)`
  width: 14px;
  justify-content: center;
  font-size: 22px;
`;

const AvatarButton = styled(ToolButton)`
  border-radius: 50%;
`;

const Badge = styled.span`
  position: absolute;
  top: -15px;
  right: -18px;
  width: 26px;
  height: 26px;
  border-radius: 50%;
  background: #f00;
  color: #fff;
  font-size: 17px;
  font-weight: 600;
  line-height: 26px;
  text-align: center;
`;

const Crumbs = styled.nav`
  position: relative;
  z-index: 1;
  display: flex;
  align-items: center;
  height: 70px;
  padding: 0 10px 3px;
  background: #fff;
  border-bottom: 1px solid #c9c9c9;
  box-shadow: 0 4px 14px rgba(0, 0, 0, 0.45);
  a {
    margin: 0 4px 0 15px;
    color: #3d9361;
    font-weight: 600;
    text-decoration: none;
  }
  span {
    margin: 0 4px 0 3px;
  }
`;

const Content = styled.main`
  background: #f7f7f7;
  border-bottom: 1px solid #3d9361;
`;

const Banner = styled.div`
  display: flex;
  justify-content: flex-end;
  padding: 17px 18px 18px 24px;
  border-radius: 0 0 4px 4px;
  background: #d3aa55;
  color: #fff;
  font-size: 19px;
  line-height: 28px;
  p {
    margin: 0;
  }
  strong {
    font-weight: 600;
  }
  a {
    color: inherit;
    font-weight: 700;
  }
`;

const CloseButton = styled.button`
  display: flex;
  align-self: flex-start;
  margin-left: 15px;
`;

const Card = styled.form`
  max-width: 1400px;
  margin: 34px auto 35px;
  border: 1px solid #ececec;
  border-radius: 6px;
  background: #fff;
  box-shadow: 0 2px 5px rgba(0, 0, 0, 0.16);
  overflow: hidden;
`;

const Fields = styled.div`
  display: grid;
  grid-template-columns: 162px 1fr;
  align-items: center;
  gap: 22px 14px;
  padding: 22px 21px 20px 0;
`;

const Label = styled.label`
  display: flex;
  align-items: center;
  justify-content: flex-end;
  gap: 9px;
  font-size: 22px;
  line-height: 24px;
`;

const CriteriaLabel = styled.div`
  display: grid;
  justify-items: end;
`;

const Toggle = styled.div`
  display: flex;
  width: 108px;
  height: 32px;
  border: 1px solid #ddd;
  border-radius: 5px;
  overflow: hidden;
`;

const ToggleButton = styled.button`
  flex: 1;
  background: ${({ $active }) => ($active ? "#3d9361" : "#fff")};
  color: ${({ $active }) => ($active ? "#fff" : "#2d2d2d")};
  font-size: 17px;
  text-decoration: ${({ $active }) => ($active ? "none" : "line-through")};
`;

const Input = styled.input`
  width: 100%;
  height: ${({ $tall }) => ($tall ? "55px" : "47px")};
  padding: 0 16px;
  border: 1px solid #dcdcdc;
  border-radius: 5px;
  background: #f7f7f7;
  font-size: 20px;
  &::placeholder {
    color: #999;
  }
`;

const Dates = styled.div`
  display: flex;
  align-items: center;
  > label {
    flex: 1;
    font-size: 22px;
    text-align: center;
  }
`;

const DateInput = styled(Input)`
  width: 140px;
  height: 42px;
`;

const SelectWrap = styled.div`
  position: relative;
  flex: 0 0 562px;
  select {
    width: 100%;
    height: 47px;
    padding: 0 14px;
    appearance: none;
    border: 1px solid #dcdcdc;
    border-radius: 5px;
    background: #f7f7f7;
    font-size: 20px;
  }
`;

const SelectArrow = styled.span`
  position: absolute;
  top: 8px;
  right: 1px;
  display: flex;
  align-items: center;
  justify-content: center;
  width: 46px;
  height: 31px;
  border-left: 1px solid #dcdcdc;
  pointer-events: none;
`;

const CardFooter = styled.div`
  display: flex;
  gap: 14px;
  padding: 17px 21px 18px 22px;
  background: #e4e4e4;
`;

const FooterTitle = styled.span`
  align-self: center;
  width: 138px;
  font-size: 22px;
`;

const CategoryButton = styled.button`
  flex: 1 1 ${({ $width }) => $width}px;
  display: flex;
  align-items: center;
  height: 54px;
  padding: 0 12px;
  border-radius: 5px;
  background: #3d9361;
  color: #fff;
  font-size: 17px;
  line-height: 22px;
  white-space: pre-line;
  svg {
    flex: none;
  }
  span {
    flex: 1;
    padding-left: 6px;
    text-align: center;
  }
`;

const AllButton = styled(CategoryButton)`
  background: #4bb377;
  font-size: 22px;
  font-weight: 600;
  span {
    flex: none;
    padding-left: 14px;
  }
`;

const MapFrame = styled.section`
  position: relative;
  height: 369px;
  margin: 0 68px 0 70px;
  border: 1px solid #c8c8c8;
  border-bottom: none;
  border-radius: 6px 6px 0 0;
  overflow: hidden;
`;

const MapSvg = styled.svg`
  display: block;
  width: 100%;
  height: 100%;
`;

const PlaceName = styled.text`
  font-family: "Noto Sans", sans-serif;
  font-style: ${({ $italic }) => ($italic ? "italic" : "normal")};
  paint-order: stroke;
  stroke: rgba(255, 255, 255, 0.6);
  stroke-width: 3px;
`;

const ShieldName = styled.text`
  fill: #7b2d4b;
  font-family: "Noto Sans", sans-serif;
  font-size: 14px;
`;

const MapTypes = styled.div`
  position: absolute;
  top: 14px;
  left: 14px;
  display: flex;
  height: 56px;
  border-radius: 3px;
  background: #fff;
  box-shadow: 0 1px 5px rgba(0, 0, 0, 0.3);
`;

const MapTypeButton = styled.button`
  padding: 0 24px;
  color: ${({ $active }) => ($active ? "#000" : "#565656")};
  font-family: Roboto, sans-serif;
  font-size: 25px;
  font-weight: ${({ $active }) => ($active ? 500 : 400)};
  & + & {
    border-left: 1px solid #e6e6e6;
  }
`;

const DrawTools = styled.div`
  position: absolute;
  top: 7px;
  left: 50%;
  display: flex;
  transform: translateX(-50%);
  border-radius: 3px;
  background: #fff;
  box-shadow: 0 1px 5px rgba(0, 0, 0, 0.2);
  button {
    display: grid;
    place-items: center;
    width: 33px;
    height: 41px;
    padding-bottom: 5px;
  }
  button + button {
    border-left: 1px solid #e6e6e6;
  }
`;

const MapSquareButton = styled.button`
  position: absolute;
  right: 14px;
  ${({ $bottom }) => ($bottom ? "bottom: 0;" : "top: 14px;")}
  display: grid;
  place-items: center;
  width: 56px;
  height: 56px;
  border-radius: 3px;
  background: #fff;
  box-shadow: 0 1px 5px rgba(0, 0, 0, 0.3);
`;

const Overlay = styled.div`
  position: absolute;
  inset: 0;
  z-index: 3;
  color: #ed1c24;
  font-family: Lato, sans-serif;
  font-size: 26px;
  font-weight: 900;
  line-height: 36px;
  pointer-events: none;
`;

const Frame = styled.div`
  position: absolute;
  top: ${({ $top }) => $top}px;
  left: ${({ $left }) => $left}px;
  width: ${({ $width }) => $width}px;
  height: ${({ $height }) => $height}px;
  border: 9px solid #e61b1b;
`;

const ArrowLayer = styled.svg`
  position: absolute;
  top: 0;
  ${({ $end }) => ($end ? "right: 0;" : "left: 0;")}
  fill: #e61b1b;
`;

const Note = styled.span`
  position: absolute;
  top: ${({ $top }) => $top}px;
  left: ${({ $left }) => $left}px;
  white-space: nowrap;
`;

const NoteBox = styled.span`
  position: absolute;
  top: ${({ $top }) => $top}px;
  right: ${({ $right }) => $right}px;
  width: ${({ $width }) => $width}px;
  height: ${({ $height }) => $height}px;
  background: #fff;
  text-align: center;
`;
